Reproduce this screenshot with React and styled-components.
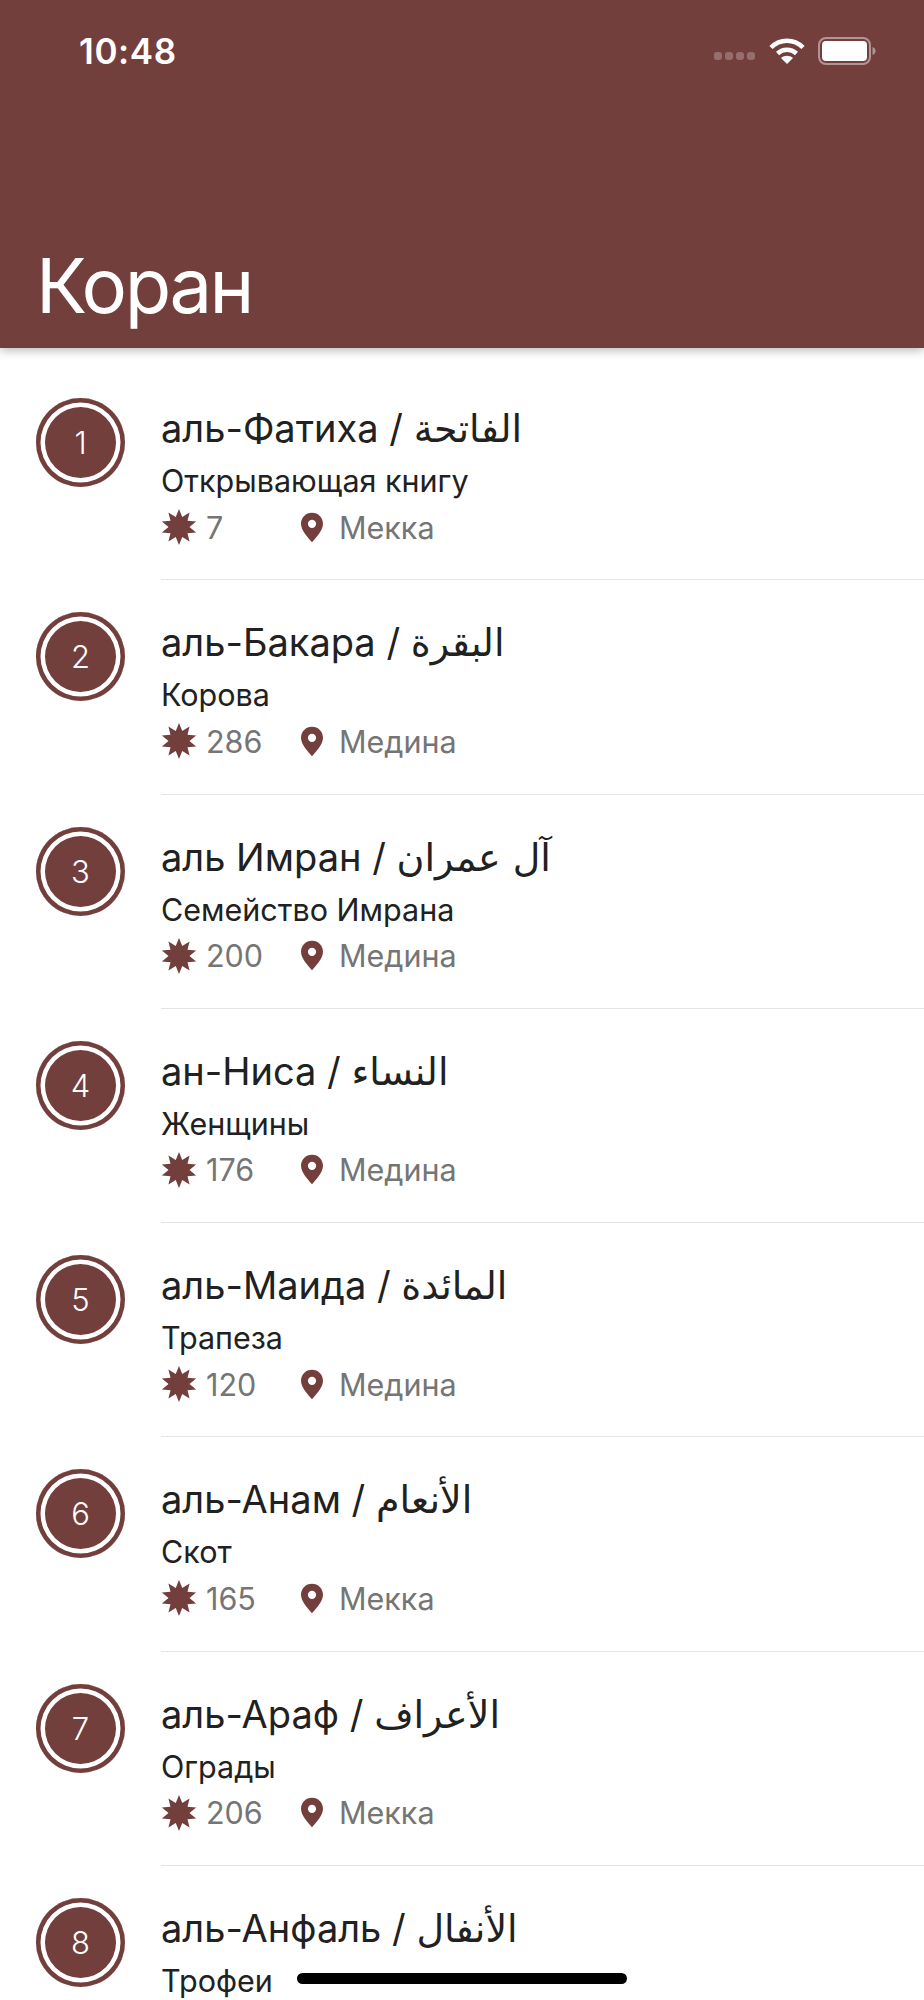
import React from 'react';
import styled, { createGlobalStyle } from 'styled-components';

const BROWN = '#723f3c';

const GlobalStyle = createGlobalStyle`
    html, body {
        margin: 0;
        padding: 0;
        background: #ffffff;
    }
    body {
        font-family: Inter, "Noto Sans", "DejaVu Sans", sans-serif;
    }
`;

const Screen = styled.div`
    background: #ffffff;
    height: 2000px;
    overflow: hidden;
    position: relative;
    width: 924px;
`;

const Header = styled.header`
    background: ${BROWN};
    box-shadow: 0 2px 10px rgba(0, 0, 0, 0.3);
    box-sizing: border-box;
    color: #ffffff;
    display: flex;
    flex-direction: column;
    height: 348px;
    justify-content: space-between;
    padding: 30px 48px 23px 36px;
    position: relative;
`;

const StatusBar = styled.div`
    align-items: center;
    display: flex;
    height: 42px;
    justify-content: space-between;
    padding-left: 43px;
`;

const Time = styled.span`
    font-size: 35px;
    font-weight: 600;
    letter-spacing: 0.6px;
`;

const StatusIcons = styled.div`
    align-items: center;
    display: flex;
    gap: 13px;
`;

const SignalIcon = styled.svg`
    margin-top: 9px;
`;

const Title = styled.h1`
    font-size: 76px;
    font-weight: 400;
    letter-spacing: -2.5px;
    line-height: 80px;
    margin: 0;
`;

const List = styled.ul`
    list-style: none;
    margin: 0;
    padding: 18px 0 0;
`;

const Row = styled.li`
    box-sizing: border-box;
    display: flex;
    gap: 36px;
    height: 214.26px;
    padding: 32px 0 0 36px;
`;

const Badge = styled.div`
    align-items: center;
    background: ${BROWN};
    border-radius: 50%;
    box-shadow: inset 0 0 0 4.5px ${BROWN}, inset 0 0 0 9px #ffffff;
    color: #ffffff;
    display: flex;
    flex: none;
    font-size: 31px;
    font-weight: 300;
    height: 89px;
    justify-content: center;
    width: 89px;
`;

const Body = styled.div`
    border-bottom: 1px solid #e4e4e4;
    display: flex;
    flex: 1;
    flex-direction: column;
`;

const Name = styled.div`
    color: #212121;
    font-size: 38px;
    line-height: 46px;
    margin-top: 7px;
`;

const Arabic = styled.span`
    font-family: "DejaVu Sans", sans-serif;
`;

const Meaning = styled.div`
    color: #212121;
    font-size: 30.5px;
    line-height: 38px;
    margin-top: 10px;
`;

const Meta = styled.div`
    align-items: center;
    color: #757575;
    display: flex;
    font-size: 30.5px;
    height: 42px;
    margin-top: 6px;
`;

const Verses = styled.div`
    align-items: center;
    display: flex;
    gap: 9px;
    width: 140px;
`;

const Place = styled.div`
    align-items: center;
    display: flex;
    gap: 16px;
`;

const HomeBar = styled.div`
    background: #000000;
    border-radius: 6px;
    bottom: 16px;
    height: 11px;
    left: 297px;
    position: absolute;
    width: 330px;
`;

const Star = () => {
    const points = [];
    for (let i = 0; i < 20; i++) {
        const r = i % 2 === 0 ? 18 : 10.5;
        const a = (Math.PI * i) / 10 - Math.PI / 2;
        points.push(`${18 + r * Math.cos(a)},${18 + r * Math.sin(a)}`);
    }
    return (
        <svg width="36" height="36" viewBox="0 0 36 36">
            <polygon fill={BROWN} points={points.join(' ')} />
        </svg>
    );
};

const Pin = () => (
    <svg width="22" height="31" viewBox="0 0 24 32">
        <path
            fill={BROWN}
            fillRule="evenodd"
            d="M12 0C5.2 0 0 5.2 0 12c0 7.5 8 15.500 12 20 4-4.500 12-12.500 12-20C24 5.200 18.800 0 12 0zm0 7.500a4.500 4.500 0 1 1 0 9 4.500 4.500 0 0 1 0-9z"
        />
    </svg>
);

const Signal = () => (
    <SignalIcon width="42" height="10" viewBox="0 0 42 10">
        {[0, 11, 22, 33].map(x => (
            <rect key={x} x={x} y="1" width="8" height="8" rx="3" fill="#ffffff" opacity="0.25" />
        ))}
    </SignalIcon>
);

const Wifi = () => (
    <svg width="36" height="28" viewBox="0 0 36 28">
        <g fill="none" stroke="#ffffff" strokeWidth="4.500">
            <path d="M2 10.500C11 1.500 25 1.500 34 10.500" />
            <path d="M8.500 16.500C14 11.500 22 11.500 27.500 16.500" />
        </g>
        <path fill="#ffffff" d="M18 27l-6-6c3.500-3 8.500-3 12 0z" />
    </svg>
);

const Battery = () => (
    <svg width="58" height="28" viewBox="0 0 58 28">
        <rect x="1" y="1" width="51" height="26" rx="7" fill="none" stroke="#ffffff" strokeOpacity="0.45" strokeWidth="2" />
        <rect x="4" y="4" width="45" height="20" rx="4" fill="#ffffff" />
        <path d="M54.500 10c2 .7 3 2.200 3 4s-1 3.300-3 4z" fill="#ffffff" opacity="0.45" />
    </svg>
);

const SURAS = [
    { id: 1, name: 'аль-Фатиха', arabic: 'الفاتحة', meaning: 'Открывающая книгу', verses: 7, place: 'Мекка' },
    { id: 2, name: 'аль-Бакара', arabic: 'البقرة', meaning: 'Корова', verses: 286, place: 'Медина' },
    { id: 3, name: 'аль Имран', arabic: 'آل عمران', meaning: 'Семейство Имрана', verses: 200, place: 'Медина' },
    { id: 4, name: 'ан-Ниса', arabic: 'النساء', meaning: 'Женщины', verses: 176, place: 'Медина' },
    { id: 5, name: 'аль-Маида', arabic: 'المائدة', meaning: 'Трапеза', verses: 120, place: 'Медина' },
    { id: 6, name: 'аль-Анам', arabic: 'الأنعام', meaning: 'Скот', verses: 165, place: 'Мекка' },
    { id: 7, name: 'аль-Араф', arabic: 'الأعراف', meaning: 'Ограды', verses: 206, place: 'Мекка' },
    // the meta line of the last row is below the fold
    { id: 8, name: 'аль-Анфаль', arabic: 'الأنفال', meaning: 'Трофеи' }
];

const App = () => (
    <Screen>
        <GlobalStyle />
        <Header>
            <StatusBar>
                <Time>10:48</Time>
                <StatusIcons>
                    <Signal />
                    <Wifi />
                    <Battery />
                </StatusIcons>
            </StatusBar>
            <Title>Коран</Title>
        </Header>
        <List>
            {SURAS.map(sura => (
                <Row key={sura.id}>
                    <Badge>{sura.id}</Badge>
                    <Body>
                        <Name>
                            {sura.name} / <Arabic>{sura.arabic}</Arabic>
                        </Name>
                        <Meaning>{sura.meaning}</Meaning>
                        {sura.verses ? (
                            <Meta>
                                <Verses>
                                    <Star />
                                    {sura.verses}
                                </Verses>
                                <Place>
                                    <Pin />
                                    {sura.place}
                                </Place>
                            </Meta>
                        ) : null}
                    </Body>
                </Row>
            ))}
        </List>
        <HomeBar />
    </Screen>
);

export default App;
